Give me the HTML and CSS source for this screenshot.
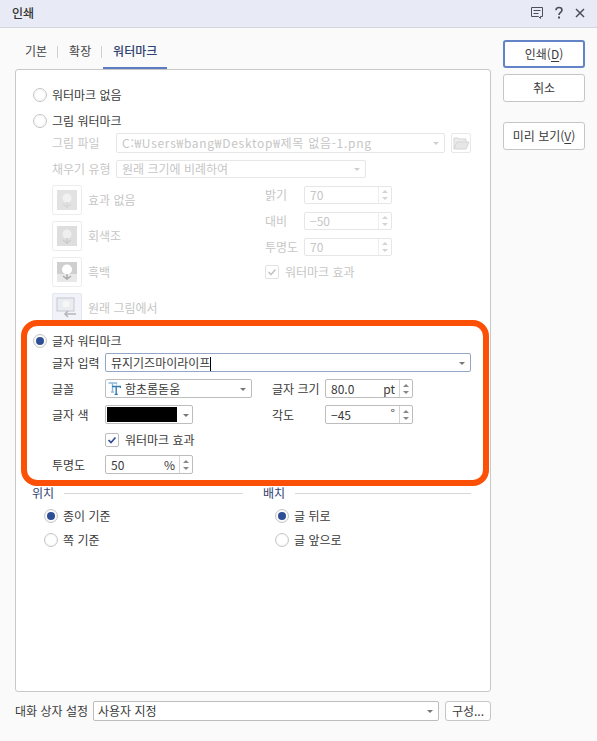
FILE: index.html
```html
<!DOCTYPE html>
<html lang="ko">
<head>
<meta charset="utf-8">
<title>인쇄</title>
<link rel="stylesheet" href="styles.css">
</head>
<body>
<header class="titlebar">
  <span class="title">인쇄</span>
  <div class="title-icons">
    <svg width="14" height="14" viewBox="0 0 14 14" class="ti"><path d="M1.5 1.5h11v9h-2v2l-2-2h-7z" fill="none" stroke="#4a4f58" stroke-width="1"/><path d="M3.5 4.5h7M3.5 7.5h5" stroke="#4a4f58" stroke-width="1"/></svg>
    <svg width="10" height="14" viewBox="0 0 10 14" class="ti"><path d="M2 4.2C2 2.4 3.3 1.5 5 1.5s3 1 3 2.6c0 2.3-3 2.3-3 5" fill="none" stroke="#4a4f58" stroke-width="1.6"/><rect x="4" y="10.5" width="2" height="2" fill="#4a4f58"/></svg>
    <svg width="12" height="12" viewBox="0 0 12 12" class="ti"><path d="M2 2l8 8M10 2l-8 8" stroke="#4a4f58" stroke-width="1.5"/></svg>
  </div>
</header>

<div class="dialog">
  <main class="left">
    <nav class="tabs">
      <span class="tab">기본</span><i class="tab-sep"></i>
      <span class="tab">확장</span><i class="tab-sep"></i>
      <span class="tab tab-on">워터마크</span>
    </nav>

    <section class="panel">
      <label class="row radio-row first"><i class="radio"></i>워터마크 없음</label>
      <label class="row radio-row r2"><i class="radio"></i>그림 워터마크</label>

      <div class="row sub r3 dis">
        <span class="lab lab64">그림 파일</span>
        <div class="field w329 h20"><span class="grow path">C:₩Users₩bang₩Desktop₩제목 없음-1.png</span><i class="caret"></i></div>
        <button class="folder" type="button">
          <svg width="18" height="16" viewBox="0 0 18 16"><path d="M2 14V3h4l1 1h7v3" fill="#ececec" stroke="#d4d4d4"/><path d="M2 14l3-7h12l-3 7z" fill="#e6e6e6" stroke="#d4d4d4"/></svg>
        </button>
      </div>
      <div class="row sub r4 dis">
        <span class="lab lab64">채우기 유형</span>
        <div class="field w250 h18"><span class="grow">원래 크기에 비례하여</span><i class="caret"></i></div>
      </div>

      <div class="effects dis">
        <div class="fx-col">
          <div class="fx"><span class="fx-btn"><svg width="20" height="20" viewBox="0 0 20 20"><rect width="20" height="20" fill="#e2e2e2"/><circle cx="10" cy="8" r="4.5" fill="#f1f1f1"/><path d="M10 12v6M6 14l4 3 4-3" stroke="#d2d2d2" fill="none"/></svg></span>효과 없음</div>
          <div class="fx"><span class="fx-btn"><svg width="20" height="20" viewBox="0 0 20 20"><rect width="20" height="20" fill="#dedede"/><circle cx="10" cy="8" r="4.5" fill="#efefef"/><path d="M10 12v6M6 14l4 3 4-3" stroke="#c4c4c4" fill="none"/></svg></span>회색조</div>
          <div class="fx"><span class="fx-btn"><svg width="20" height="20" viewBox="0 0 20 20"><rect width="20" height="20" fill="#cfcfcf"/><rect y="12" width="20" height="8" fill="#e8e8e8"/><circle cx="10" cy="7.5" r="5" fill="#fff"/><path d="M10 12v6M6 14l4 3 4-3" stroke="#a9a9a9" stroke-width="1.4" fill="none"/></svg></span>흑백</div>
          <div class="fx"><span class="fx-btn fx-tint"><svg width="22" height="22" viewBox="0 0 22 22"><rect x="1" y="1" width="17" height="13" fill="#e9edf2" stroke="#c6c9cf"/><circle cx="10" cy="7" r="3.5" fill="#f6f6f6"/><path d="M20 17H9M12 14l-3 3 3 3" stroke="#b4b7bc" stroke-width="1.6" fill="none"/></svg></span>원래 그림에서</div>
        </div>
        <div class="adj-col">
          <div class="row adj"><span class="lab lab39">밝기</span><div class="spin w88"><span class="grow">70</span><span class="arrows"><i class="up"></i><i class="down"></i></span></div></div>
          <div class="row adj"><span class="lab lab39">대비</span><div class="spin w88"><span class="grow">−50</span><span class="arrows"><i class="up"></i><i class="down"></i></span></div></div>
          <div class="row adj"><span class="lab lab39">투명도</span><div class="spin w88"><span class="grow">70</span><span class="arrows"><i class="up"></i><i class="down"></i></span></div></div>
          <label class="row adj-check"><span class="check"><svg width="10" height="10" viewBox="0 0 10 10"><path d="M1.5 5l2.5 2.5 4.5-5" fill="none" stroke="#c4c4c4" stroke-width="1.6"/></svg></span>워터마크 효과</label>
        </div>
      </div>

      <label class="row radio-row r-text"><i class="radio on"></i>글자 워터마크</label>
      <div class="row sub t1">
        <span class="lab lab53">글자 입력</span>
        <div class="field w366 h19 focus"><span class="grow">뮤지기즈마이라이프<i class="cursor"></i></span><i class="caret"></i></div>
      </div>
      <div class="row sub t2">
        <span class="lab lab53">글꼴</span>
        <div class="field w147 h19 font-field">
          <svg width="13" height="13" viewBox="0 0 13 13"><path d="M0.5 1h8v1.5M4.5 1v9M3 10h3" fill="none" stroke="#8fb9da" stroke-width="1.4"/><path d="M4 4.5h8.5v1.5M8.2 4.5v8M6.6 12.5h3.2" fill="none" stroke="#2f7bb0" stroke-width="1.4"/></svg>
          <span class="grow">함초롬돋움</span><i class="caret"></i>
        </div>
        <span class="lab lab53 col2">글자 크기</span>
        <div class="spin w88 h19"><span class="grow">80.0</span><span class="unit">pt</span><span class="arrows"><i class="up"></i><i class="down"></i></span></div>
      </div>
      <div class="row sub t3">
        <span class="lab lab53">글자 색</span>
        <div class="field w88 h19 color-field"><span class="swatch"></span><i class="caret"></i></div>
        <span class="lab lab53 col3">각도</span>
        <div class="spin w88 h19"><span class="grow">−45</span><span class="unit deg">°</span><span class="arrows"><i class="up"></i><i class="down"></i></span></div>
      </div>
      <label class="row sub t4"><span class="check on"><svg width="10" height="10" viewBox="0 0 10 10"><path d="M1.5 5l2.5 2.5 4.5-5" fill="none" stroke="#2f4f94" stroke-width="1.7"/></svg></span>워터마크 효과</label>
      <div class="row sub t5">
        <span class="lab lab53">투명도</span>
        <div class="spin w88 h19"><span class="grow">50</span><span class="unit">%</span><span class="arrows"><i class="up"></i><i class="down"></i></span></div>
      </div>

      <div class="groups">
        <div class="group g1">
          <div class="group-head"><span>위치</span><i></i></div>
          <label class="row opt"><i class="radio on"></i>종이 기준</label>
          <label class="row opt"><i class="radio"></i>쪽 기준</label>
        </div>
        <div class="group g2">
          <div class="group-head"><span>배치</span><i></i></div>
          <label class="row opt"><i class="radio on"></i>글 뒤로</label>
          <label class="row opt"><i class="radio"></i>글 앞으로</label>
        </div>
      </div>

      <div class="highlight"></div>
    </section>

    <footer class="row foot">
      <span class="foot-lab">대화 상자 설정</span>
      <div class="field foot-sel"><span class="grow">사용자 지정</span><i class="caret"></i></div>
      <button class="btn foot-btn" type="button">구성...</button>
    </footer>
  </main>

  <aside class="actions">
    <button class="btn act primary" type="button">인쇄(<u>D</u>)</button>
    <button class="btn act" type="button">취소</button>
    <button class="btn act preview" type="button">미리 보기(<u>V</u>)</button>
  </aside>
</div>
</body>
</html>
```

FILE: styles.css
```css
* { box-sizing: border-box; }
html, body { margin: 0; height: 741px; overflow: hidden; }
body {
  background: #fafafa;
  color: #3a3a3a;
  font: 12px/16px "Noto Sans CJK KR", "Noto Sans", sans-serif;
}
i { display: block; font-style: normal; }
u { text-underline-offset: 2px; }

.titlebar {
  height: 28px;
  background: #e8ebf5;
  border-bottom: 1px solid #d3d5dd;
  display: flex;
  align-items: center;
  justify-content: space-between;
  padding: 0 11px 1px 12px;
}
.title { color: #333; font-weight: 500; }
.title-icons { display: flex; align-items: center; gap: 10px; }
.ti { display: block; }

.dialog { display: flex; padding: 0 12px 0 15px; gap: 12px; }
.left { width: 476px; }

.tabs { height: 41px; display: flex; align-items: center; padding: 5px 0 0 10px; }
.tab { color: #444; white-space: nowrap; flex: none; }
.tab-sep { width: 1px; height: 12px; background: #cfcfcf; margin: 2px 11px 0 10px; flex: none; }
.tab-on {
  color: #2f4270;
  font-weight: 500;
  width: 64px;
  margin-left: -10px;
  margin-top: -5px;
  height: 41px;
  line-height: 46px;
  text-align: center;
  border-bottom: 2px solid #5b7bc2;
  position: relative;
  z-index: 1;
}

.panel {
  position: relative;
  height: 623px;
  background: #fff;
  border: 1px solid #c8c8c8;
  border-radius: 3px;
  padding: 0 0 0 17px;
}
.row { display: flex; align-items: center; }
.grow { flex: 1; min-width: 0; white-space: nowrap; overflow: hidden; }
.path { letter-spacing: 0.72px; }

.radio {
  width: 14px;
  height: 14px;
  flex: none;
  border: 1px solid #c6c6c6;
  border-radius: 50%;
  background: #fff;
  margin-right: 5px;
  box-shadow: inset 0 0 0 1px #f5f5f5;
  position: relative;
}
.radio.on::after {
  content: "";
  position: absolute;
  left: 2px;
  top: 2px;
  width: 8px;
  height: 8px;
  border-radius: 50%;
  background: #2f4f94;
}
.radio-row { height: 14px; }
.first { margin-top: 18px; }
.r2 { margin-top: 12px; }

.sub { margin-left: 19px; }
.dis, .dis .field, .dis .spin { color: #c6c6c6; }
.r3 { margin-top: 5px; height: 20px; }
.r4 { margin-top: 7px; height: 18px; }
.lab { flex: none; white-space: nowrap; }
.lab64 { width: 64px; }
.lab53 { width: 53px; }
.lab39 { width: 39px; }

.field, .spin {
  display: flex;
  align-items: center;
  flex: none;
  background: #fff;
  border: 1px solid #bdbdbd;
  border-radius: 2px;
  padding-left: 5px;
  color: #3a3a3a;
}
.dis .field, .dis .spin { border-color: #e6e6e6; }
.w329 { width: 329px; }
.w250 { width: 250px; }
.w366 { width: 366px; }
.w147 { width: 147px; }
.w88 { width: 88px; }
.h20 { height: 20px; }
.h18 { height: 18px; }
.h19 { height: 19px; }
.focus { border-color: #93a6c8; }
.cursor { display: inline-block; width: 1px; height: 14px; background: #000; vertical-align: -3px; }
.caret {
  flex: none;
  width: 0;
  height: 0;
  margin: 1px 5px 0 6px;
  border-left: 3px solid transparent;
  border-right: 3px solid transparent;
  border-top: 3px solid #777;
}
.dis .caret { border-top-color: #cfcfcf; }
.folder {
  width: 20px;
  height: 20px;
  margin-left: 6px;
  padding: 0;
  display: flex;
  align-items: center;
  justify-content: center;
  background: #fff;
  border: 1px solid #e8e8e8;
  border-radius: 2px;
}
.font-field { padding-left: 2px; gap: 4px; }
.color-field { padding-left: 1px; justify-content: space-between; }
.swatch { width: 70px; height: 15px; background: #000; flex: none; }
.col2 { margin-left: 20px; }
.col3 { margin-left: 79px; }

.spin .unit { margin-right: 4px; }
.spin .deg { align-self: flex-start; line-height: 14px; }
.arrows {
  flex: none;
  width: 13px;
  align-self: stretch;
  border-left: 1px solid #d4d4d4;
  display: flex;
  flex-direction: column;
  align-items: center;
  justify-content: center;
  gap: 4px;
}
.dis .arrows { border-left-color: #ededed; }
.up, .down { width: 0; height: 0; border-left: 3px solid transparent; border-right: 3px solid transparent; }
.up { border-bottom: 3px solid #888; }
.down { border-top: 3px solid #888; }
.dis .up { border-bottom-color: #d4d4d4; }
.dis .down { border-top-color: #d4d4d4; }

.effects { display: flex; margin: 7px 0 0 19px; height: 138px; }
.fx-col { width: 213px; display: flex; flex-direction: column; gap: 6px; }
.fx { display: flex; align-items: center; height: 30px; gap: 6px; }
.fx-btn {
  width: 30px;
  height: 30px;
  background: #fff;
  border: 1px solid #ececec;
  border-radius: 2px;
  display: flex;
  align-items: center;
  justify-content: center;
}
.fx-tint { background: #f1f3f9; border-color: #e4e7f1; }
.adj-col { padding-top: 1px; }
.adj { height: 18px; margin-bottom: 8px; }
.adj-check { margin-top: 1px; }

.check {
  width: 14px;
  height: 14px;
  flex: none;
  margin-right: 6px;
  border: 1px solid #e2e2e2;
  border-radius: 2px;
  display: flex;
  align-items: center;
  justify-content: center;
  background: #fff;
}
.check.on { border-color: #bdbdbd; }

.r-text { margin-top: 11px; }
.t1 { margin-top: 5px; }
.t2 { margin-top: 7px; }
.t3 { margin-top: 7px; }
.t4 { margin: 9px 0 0 72px; height: 14px; }
.t5 { margin-top: 8px; }

.groups { display: flex; margin: 11px 0 0 -1px; }
.g1 { width: 231px; }
.g2 { width: 208px; }
.group-head { display: flex; align-items: center; height: 16px; gap: 10px; color: #2f4270; }
.group-head i { height: 1px; background: #d8d8d8; flex: 1; }
.g1 .group-head i { margin-right: 20px; }
.opt { height: 14px; margin: 8px 0 0 12px; }
.opt + .opt { margin-top: 10px; }

.highlight {
  position: absolute;
  left: 5px;
  top: 250px;
  width: 468px;
  height: 166px;
  border: 6px solid #fb5006;
  border-radius: 16px;
  pointer-events: none;
}

.foot { margin-top: 9px; height: 20px; }
.foot-lab { width: 78px; flex: none; white-space: nowrap; }
.foot-sel { width: 346px; height: 20px; padding-left: 4px; }
.btn {
  font: inherit;
  color: #3a3a3a;
  background: #fff;
  border: 1px solid #c6c6c6;
  border-radius: 3px;
  padding: 0;
}
.foot-btn { width: 46px; height: 20px; margin-left: 6px; }

.actions { width: 82px; padding-top: 12px; display: flex; flex-direction: column; gap: 6px; }
.act { height: 28px; width: 82px; }
.primary { border: 2px solid #6283c6; }
.preview { margin-top: 14px; }
```
